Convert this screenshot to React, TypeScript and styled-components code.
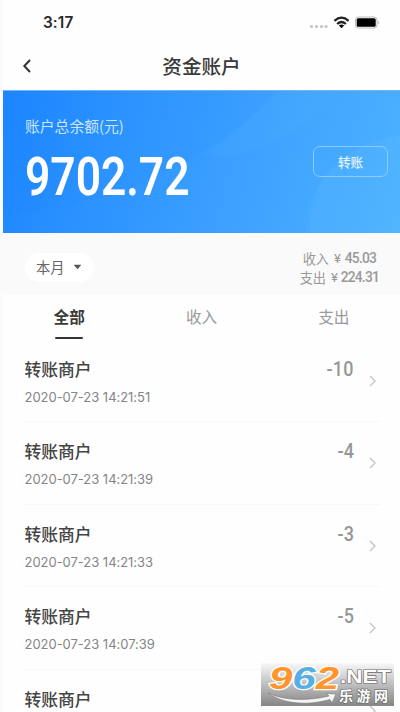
import React from 'react';
import styled, { createGlobalStyle } from 'styled-components';

const GlobalStyle = createGlobalStyle`
  * { box-sizing: border-box; }
  html, body { margin: 0; height: 712px; overflow: hidden; background: #fafafa; }
  body { font-family: "Liberation Sans", "Noto Sans CJK SC", sans-serif; }
`;

const Screen = styled.main`
  position: relative;
  width: 400px;
  height: 712px;
  padding-left: 3px;
  overflow: hidden;
  background: #fafafa;
`;

const StatusBar = styled.header`
  height: 42px;
  padding: 3px 20px 0 40px;
  display: flex;
  align-items: center;
  justify-content: space-between;
  background: #fefefe;
`;

const Clock = styled.span`
  font: 600 15.3px/20px Inter, sans-serif;
  letter-spacing: 0.1px;
  color: #2a2a2a;
`;

const StatusIcons = styled.svg`
  display: block;
  width: 72px;
  height: 16px;
`;

const NavBar = styled.nav`
  height: 48px;
  display: grid;
  grid-template-columns: 60px 1fr 60px;
  align-items: center;
  background: #fefefe;
`;

const BackIcon = styled.svg`
  width: 10px;
  height: 16px;
  margin-left: 19px;
  display: block;
`;

const NavTitle = styled.h1`
  margin: 0;
  text-align: center;
  font: 500 19.6px/28px "Noto Sans CJK SC", sans-serif;
  color: #3a3a3a;
`;

const Banner = styled.section`
  height: 143px;
  padding: 0 12px 0 22px;
  display: flex;
  justify-content: space-between;
  position: relative;
  background: linear-gradient(105deg, #1d86ff 0%, #389dff 50%, #4db2ff 100%);
  border-top: 1px solid #70b5fa;
`;

const BannerCurves = styled.svg`
  position: absolute;
  inset: 0;
  width: 397px;
  height: 142px;
`;

const Balance = styled.div`
  position: relative;
  padding-top: 24px;
`;

const BalanceLabel = styled.div`
  font: 400 14.8px/22px "Noto Sans CJK SC", sans-serif;
  color: #c9e4ff;
`;

const BalanceValue = styled.div`
  margin-top: 12px;
  font: 600 53px/56px Roboto, sans-serif;
  color: #fff;
  white-space: nowrap;
  transform: scaleX(0.836);
  transform-origin: left center;
`;

const TransferButton = styled.button`
  position: relative;
  width: 75px;
  height: 31px;
  margin-top: 55px;
  padding: 0;
  border: 1px solid #8ccbff;
  border-radius: 7px;
  background: transparent;
  color: #e6f4ff;
  font: 500 12.6px/27px "Noto Sans CJK SC", sans-serif;
`;

const FilterBar = styled.section`
  height: 62px;
  padding: 2px 21px 0 22px;
  display: flex;
  align-items: center;
  justify-content: space-between;
`;

const MonthPill = styled.button`
  width: 69px;
  height: 29px;
  margin-top: 4px;
  padding: 0 12px 0 11px;
  border: 0;
  border-radius: 15px;
  background: #fff;
  display: flex;
  align-items: center;
  justify-content: space-between;
  font: 400 14.3px/28px "Noto Sans CJK SC", sans-serif;
  color: #666;
  white-space: nowrap;
`;

const Caret = styled.svg`
  width: 9px;
  height: 6px;
`;

const Totals = styled.div`
  padding-top: 6px;
`;

const TotalLine = styled.div<{ $inset: number }>`
  display: flex;
  height: 19.5px;
  justify-content: flex-end;
  gap: 5px;
  padding-right: ${(p) => p.$inset}px;
  font: 400 13.2px/19px "Noto Sans CJK SC", sans-serif;
  color: #999;
`;

const Amount = styled.span<{ $width: number }>`
  width: ${(p) => p.$width}px;
  display: flex;
  justify-content: space-between;
  white-space: nowrap;
`;

const Figures = styled.span`
  font: 500 13.8px/19px Roboto, sans-serif;
  letter-spacing: -0.8px;
`;

const Yen = styled.span`
  width: 9px;
  font: 400 13px/19px Roboto, sans-serif;
`;

const Tabs = styled.nav`
  height: 44px;
  display: grid;
  grid-template-columns: repeat(3, 1fr);
  background: #fefefe;
`;

const Tab = styled.div<{ $active?: boolean }>`
  display: flex;
  flex-direction: column;
  align-items: center;
  padding-top: 9px;
  font: ${(p) => (p.$active ? 700 : 400)} 15.6px/24px "Noto Sans CJK SC", sans-serif;
  color: ${(p) => (p.$active ? '#3a3a3a' : '#999')};

  &::after {
    content: '';
    width: 28px;
    height: 2.5px;
    margin-top: 8.5px;
    border-radius: 1px;
    background: ${(p) => (p.$active ? '#333' : 'transparent')};
  }
`;

const List = styled.ul`
  height: 373px;
  margin: 0;
  padding: 1px 20px 0 21px;
  list-style: none;
  background: #fefefe;
  overflow: hidden;
`;

const Row = styled.li`
  height: 82.4px;
  padding: 17px 3px 0 0.5px;
  display: flex;
  border-bottom: 1px solid #f7f7f7;
`;

const Details = styled.div`
  flex: 1;
`;

const Merchant = styled.div`
  font: 500 16.8px/24px "Noto Sans CJK SC", sans-serif;
  color: #444;
`;

const Time = styled.div`
  margin-top: 6px;
  font: 400 13px/20px Inter, sans-serif;
  letter-spacing: -0.03px;
  color: #858585;
`;

const Delta = styled.div`
  font: 500 19.5px/25px Roboto, sans-serif;
  letter-spacing: 0.3px;
  color: #969696;
  transform: scaleX(0.92);
  transform-origin: right center;
`;

const Chevron = styled.svg`
  width: 7px;
  height: 12px;
  margin: 18px 1px 0 15px;
`;

const Watermark = styled.svg`
  position: absolute;
  left: 261px;
  top: 663px;
  width: 133px;
  height: 43px;
`;

const entries = [
  { time: '2020-07-23 14:21:51', delta: '-10' },
  { time: '2020-07-23 14:21:39', delta: '-4' },
  { time: '2020-07-23 14:21:33', delta: '-3' },
  { time: '2020-07-23 14:07:39', delta: '-5' },
  { time: '', delta: '' },
];

function SiteMark() {
  return (
    <Watermark viewBox="0 0 133 43">
      <defs>
        <linearGradient id="plate" x1="0" y1="0" x2="0" y2="1">
          <stop offset="0" stopColor="#f8f8f8" />
          <stop offset="0.5" stopColor="#bebebe" />
          <stop offset="1" stopColor="#858585" />
        </linearGradient>
      </defs>
      <rect width="133" height="43" fill="url(#plate)" />
      <text
        x="8" y="26" fontFamily="Liberation Sans" fontWeight="700" fontStyle="italic" fontSize="32"
        textLength="70" lengthAdjust="spacingAndGlyphs" stroke="#fff" strokeWidth="2.4" paintOrder="stroke"
      >
        <tspan fill="#ff962d">9</tspan><tspan fill="#58afe4">6</tspan><tspan fill="#ff962d">2</tspan>
      </text>
      <path d="M7 30C24 38 47 38 68 33L65 30.5L75 31L71 40L69 36.5C46 43 22 41 7 30Z" fill="#f4f4f4" stroke="#777" strokeWidth="0.6" />
      <g fill="#fff" stroke="#686868" strokeWidth="1.2" paintOrder="stroke">
        <text x="79" y="20" fontFamily="Liberation Sans" fontWeight="700" fontSize="18.5" textLength="51" lengthAdjust="spacingAndGlyphs">.NET</text>
        <text x="78" y="37.5" fontFamily="Noto Sans CJK SC" fontWeight="700" fontSize="14" textLength="49">乐游网</text>
      </g>
    </Watermark>
  );
}

export default function App() {
  return (
    <Screen>
      <GlobalStyle />
      <StatusBar>
        <Clock>3:17</Clock>
        <StatusIcons viewBox="0 0 72 16">
          <g fill="#c4c4c4">
            <circle cx="3.5" cy="11.5" r="1.6" /><circle cx="8.5" cy="11.5" r="1.6" />
            <circle cx="13.5" cy="11.5" r="1.6" /><circle cx="18" cy="11.5" r="1.6" />
          </g>
          <g fill="none" stroke="#222" strokeWidth="2.2">
            <path d="M26.4 5.8Q33.5 -.4 40.6 5.8" />
            <path d="M29.1 9Q33.5 5 37.9 9" />
          </g>
          <path d="M30.8 10.4Q33.5 8.5 36.2 10.4L33.5 13.2Z" fill="#111" />
          <rect x="47.5" y="2" width="21.5" height="11" rx="3" fill="#fff" stroke="#bbb" />
          <rect x="48.7" y="3.2" width="19" height="8.6" rx="1.5" fill="#000" />
          <path d="M70.4 5.5Q72 7.5 70.4 9.5Z" fill="#aaa" />
        </StatusIcons>
      </StatusBar>
      <NavBar>
        <BackIcon viewBox="0 0 10 16">
          <path d="M8 2L2.3 8L8 14" fill="none" stroke="#333" strokeWidth="2" />
        </BackIcon>
        <NavTitle>资金账户</NavTitle>
      </NavBar>
      <Banner>
        <BannerCurves viewBox="0 0 397 142">
          <path d="M0 0H275Q238 40 197 63C135 98 65 118 0 124Z" fill="#0878ff" opacity="0.02" />
          <path d="M340 0Q287 54 222 67L197 63Q238 40 275 0Z" fill="#6abfff" opacity="0.08" />
          <path d="M305 142C306 98 325 69 365 53Q383 46 397 45V142Z" fill="#73c8ff" opacity="0.14" />
        </BannerCurves>
        <Balance>
          <BalanceLabel>账户总余额(元)</BalanceLabel>
          <BalanceValue>9702.72</BalanceValue>
        </Balance>
        <TransferButton>转账</TransferButton>
      </Banner>
      <FilterBar>
        <MonthPill>
          本月
          <Caret viewBox="0 0 9 6"><path d="M.7 .7H8.3L4.5 5.3Z" fill="#555" /></Caret>
        </MonthPill>
        <Totals>
          <TotalLine $inset={3}>收入 <Amount $width={42}><Yen>¥</Yen><Figures>45.03</Figures></Amount></TotalLine>
          <TotalLine $inset={0}>支出 <Amount $width={48}><Yen>¥</Yen><Figures>224.31</Figures></Amount></TotalLine>
        </Totals>
      </FilterBar>
      <Tabs>
        <Tab $active>全部</Tab>
        <Tab>收入</Tab>
        <Tab>支出</Tab>
      </Tabs>
      <List>
        {entries.map((entry, index) => (
          <Row key={index}>
            <Details>
              <Merchant>转账商户</Merchant>
              <Time>{entry.time}</Time>
            </Details>
            <Delta>{entry.delta}</Delta>
            <Chevron viewBox="0 0 7 12">
              <path d="M1 1L6 6L1 11" fill="none" stroke="#c8c8c8" strokeWidth="1.5" />
            </Chevron>
          </Row>
        ))}
      </List>
      <SiteMark />
    </Screen>
  );
}
